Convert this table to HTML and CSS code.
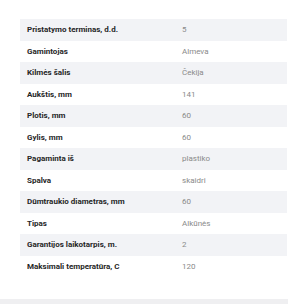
FILE: index.html
```html
<!DOCTYPE html>
<html lang="lt">
<head>
<meta charset="utf-8">
<link rel="stylesheet" href="styles.css">
</head>
<body>
<div class="wrap">
<table class="specs">
<tr><th>Pristatymo terminas, d.d.</th><td>5</td></tr>
<tr><th>Gamintojas</th><td>Almeva</td></tr>
<tr><th>Kilmės šalis</th><td>Čekija</td></tr>
<tr><th>Aukštis, mm</th><td>141</td></tr>
<tr><th>Plotis, mm</th><td>60</td></tr>
<tr><th>Gylis, mm</th><td>60</td></tr>
<tr><th>Pagaminta iš</th><td>plastiko</td></tr>
<tr><th>Spalva</th><td>skaidri</td></tr>
<tr><th>Dūmtraukio diametras, mm</th><td>60</td></tr>
<tr><th>Tipas</th><td>Alkūnės</td></tr>
<tr><th>Garantijos laikotarpis, m.</th><td>2</td></tr>
<tr><th>Maksimali temperatūra, C</th><td>120</td></tr>
</table>
</div>
<div class="band"></div>
</body>
</html>
```
FILE: styles.css
```css
html, body {
  margin: 0;
  padding: 0;
  background: #ffffff;
}
body {
  font-family: Roboto, "Liberation Sans", sans-serif;
  width: 288px;
  height: 304px;
  overflow: hidden;
}
.wrap {
  padding: 19px 1px 0 20px;
  height: 280px;
}
.specs {
  width: 100%;
  border-collapse: collapse;
  font-size: 8px;
}
.specs tr {
  height: 21.5px;
}
.specs tr:nth-child(odd) {
  background: #f2f3f6;
}
.specs th {
  text-align: left;
  font-weight: 700;
  color: #262626;
  width: 155px;
  padding: 0 0 0 7px;
  vertical-align: middle;
}
.specs td {
  color: #8a8a8a;
  padding: 0;
  vertical-align: middle;
}
.band {
  height: 5px;
  background: #efeff1;
}
```
